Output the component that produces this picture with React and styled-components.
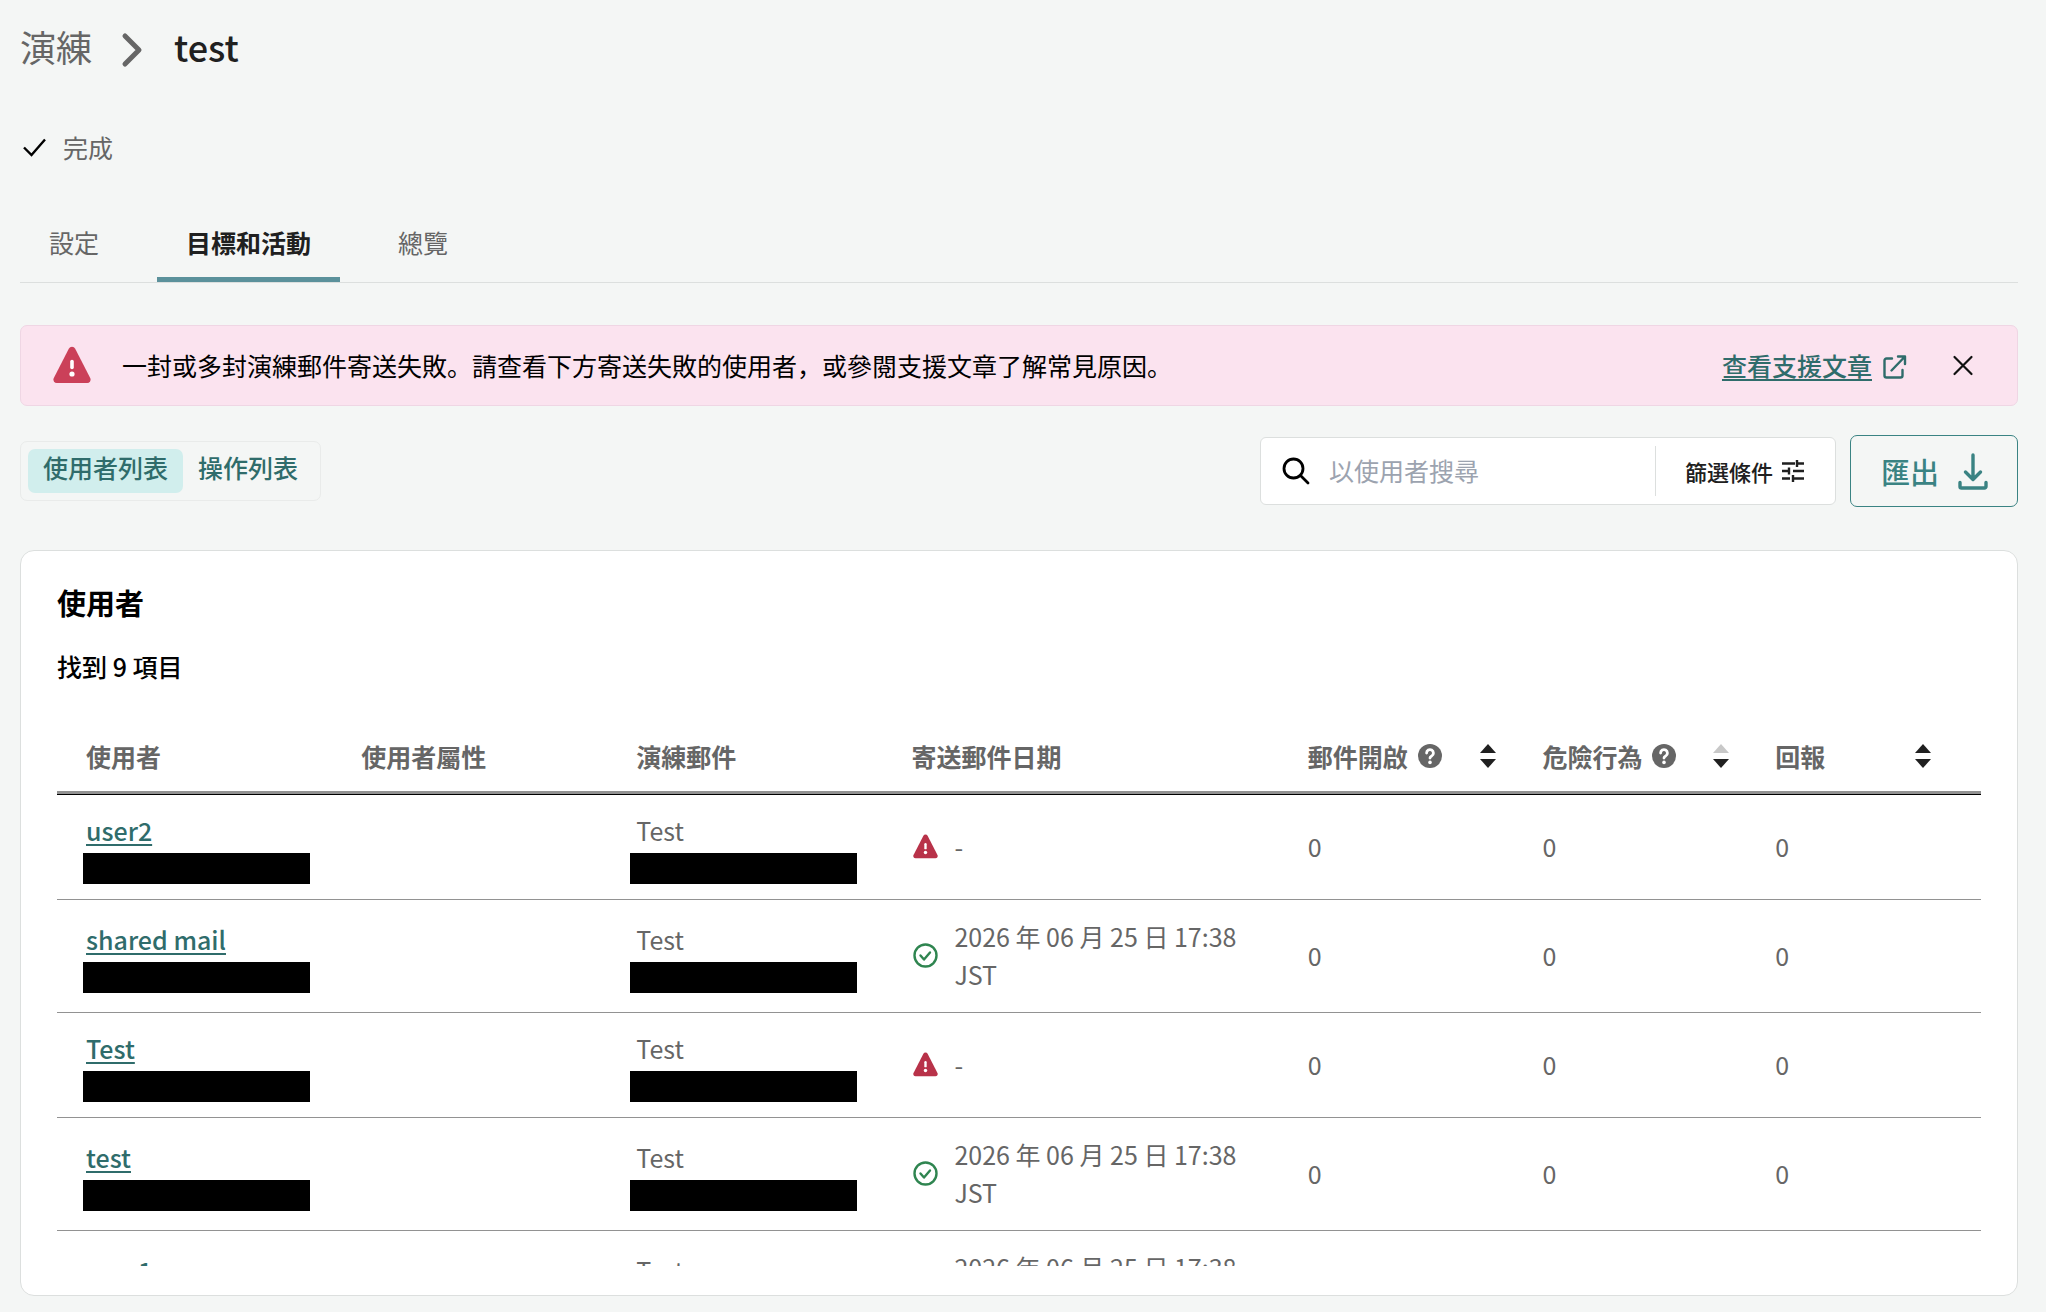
import React from "react"
import styled, { createGlobalStyle } from "styled-components"

const colors = {
  page: "#f4f6f5",
  text: "#202020",
  muted: "#666666",
  teal: "#2f6c6b",
  tealLight: "#3a8383",
  tabBar: "#5b919b",
  border: "#dcdfde",
  rule: "#929292",
  error: "#cb4059",
  errorDark: "#b83249",
  success: "#2f8550",
}

const users = [
  { id: 1, name: "user2", mail: "Test", sent: null },
  { id: 2, name: "shared mail", mail: "Test", sent: "2026 年 06 月 25 日 17:38 JST" },
  { id: 3, name: "Test", mail: "Test", sent: null },
  { id: 4, name: "test", mail: "Test", sent: "2026 年 06 月 25 日 17:38 JST" },
  { id: 5, name: "user1", mail: "Test", sent: "2026 年 06 月 25 日 17:38 JST" },
]

function ChevronIcon() {
  return (
    <svg width="24" height="44" viewBox="0 0 24 44" fill="none" stroke="#666" strokeWidth="5" strokeLinecap="round" strokeLinejoin="round" aria-hidden="true">
      <path d="M4 12l14 14L4 40" />
    </svg>
  )
}

function CheckIcon() {
  return (
    <svg width="26" height="26" viewBox="0 0 26 26" fill="none" stroke="#000" strokeWidth="2.4" aria-hidden="true">
      <path d="M3 13.5l7.5 7.5L24 5.5" />
    </svg>
  )
}

function WarningIcon({ size, color }) {
  return (
    <svg width={size} height={size} viewBox="0 0 38 38" aria-hidden="true">
      <path d="M15.8 2.8a3.6 3.6 0 0 1 6.4 0l15 29.3a3.4 3.4 0 0 1-3 4.900H3.800a3.400 3.400 0 0 1-3-4.900z" fill={color} />
      <path d="M19 15.500v6" stroke="#fff" strokeWidth="3.600" strokeLinecap="round" />
      <circle cx="19" cy="28" r="2.600" fill="#fff" />
    </svg>
  )
}

function ExternalIcon() {
  return (
    <svg width="24" height="28" viewBox="0 -4 24 28" fill="none" stroke="currentColor" strokeWidth="2.400" strokeLinecap="round" strokeLinejoin="round" aria-hidden="true">
      <path d="M9 3.500H3.500A2 2 0 0 0 1.500 5.500V20.500A2 2 0 0 0 3.500 22.500H17.500A2 2 0 0 0 19.500 20.500V15M15 1.500H22V9M21.500 2L8.500 15.500" />
    </svg>
  )
}

function CloseIcon() {
  return (
    <svg width="22" height="22" viewBox="0 0 22 22" stroke="#111" strokeWidth="2.200" strokeLinecap="round" aria-hidden="true">
      <path d="M2.500 3l17 17M19.500 3L2.500 20" />
    </svg>
  )
}

function SearchIcon() {
  return (
    <svg width="28" height="28" viewBox="0 0 28 28" fill="none" stroke="#000" strokeWidth="2.800" strokeLinecap="round" aria-hidden="true">
      <circle cx="11.500" cy="11.500" r="9.500" />
      <path d="M18.500 18.500L26 26" />
    </svg>
  )
}

function TuneIcon() {
  return (
    <svg width="24" height="24" viewBox="0 0 24 24" fill="none" stroke="#202020" strokeWidth="2.400" aria-hidden="true">
      <path d="M1 4.500h13M17 4.500h6M16 1v7M1 12h6M12 12h11M8 8.500v7M1 19.500h8M12 19.500h11M12 16v7" />
    </svg>
  )
}

function DownloadIcon() {
  return (
    <svg width="30" height="38" viewBox="0 0 30 38" fill="none" stroke="currentColor" strokeWidth="3.400" strokeLinecap="round" strokeLinejoin="round" aria-hidden="true">
      <path d="M15 3v24M7.500 20l7.500 7.500 7.500-7.500M2 30.500v4A1.500 1.500 0 0 0 3.500 36H26.500a1.500 1.500 0 0 0 1.500-1.500V30.500" />
    </svg>
  )
}

function SentIcon() {
  return (
    <svg width="25" height="25" viewBox="0 0 25 25" fill="none" stroke={colors.success} strokeWidth="2.400" strokeLinecap="round" strokeLinejoin="round" aria-hidden="true">
      <circle cx="12.500" cy="12.500" r="11" />
      <path d="M7.500 12.500l3.500 4 6-7" />
    </svg>
  )
}

function HelpIcon() {
  return (
    <svg width="24" height="24" viewBox="0 0 24 24" fill="none" aria-hidden="true">
      <circle cx="12" cy="12" r="12" fill="#666" />
      <path d="M8.600 9a3.400 3.400 0 1 1 5.200 2.900C12.600 12.700 12 13.100 12 14" stroke="#fff" strokeWidth="2.800" strokeLinecap="round" />
      <circle cx="12" cy="18.400" r="1.800" fill="#fff" />
    </svg>
  )
}

function SortIcon({ dimUp }) {
  return (
    <svg width="16" height="26" viewBox="0 0 16 26" aria-hidden="true">
      <path d="M8 1l8 9H0z" fill={dimUp ? "#c8c8c8" : "#202020"} />
      <path d="M8 25l8-9H0z" fill="#202020" />
    </svg>
  )
}

function SortHeader({ label, help, dimUp, last }) {
  return (
    <HeadCell $last={last}>
      <HeadContent>
        {label}
        {help && <HelpIcon />}
        <SortButton type="button" aria-label={label}>
          <SortIcon dimUp={dimUp} />
        </SortButton>
      </HeadContent>
    </HeadCell>
  )
}

function UserRow({ name, mail, sent }) {
  return (
    <tr>
      <Cell>
        <Stack>
          <NameLink href="#user">{name}</NameLink>
          <Redacted $outdent={3} />
        </Stack>
      </Cell>
      <Cell />
      <Cell>
        <Stack>
          <span>{mail}</span>
          <Redacted $outdent={6} />
        </Stack>
      </Cell>
      <Cell $tall>
        <SentDate>
          {sent ? <SentIcon /> : <WarningIcon size={25} color={colors.errorDark} />}
          <span>{sent || "-"}</span>
        </SentDate>
      </Cell>
      <Cell>0</Cell>
      <Cell>0</Cell>
      <Cell>0</Cell>
    </tr>
  )
}

export default function App() {
  return (
    <Page>
      <GlobalStyle />
      <Breadcrumb aria-label="breadcrumb">
        <a href="#list">演練</a>
        <ChevronIcon />
        <h1>test</h1>
      </Breadcrumb>
      <Status>
        <CheckIcon />
        完成
      </Status>
      <Tabs>
        <Tab type="button">設定</Tab>
        <Tab type="button" $active>目標和活動</Tab>
        <Tab type="button">總覽</Tab>
      </Tabs>
      <Alert role="alert">
        <WarningIcon size={38} color={colors.error} />
        <p>一封或多封演練郵件寄送失敗。請查看下方寄送失敗的使用者，或參閱支援文章了解常見原因。</p>
        <AlertLink href="#support">
          <span>查看支援文章</span>
          <ExternalIcon />
        </AlertLink>
        <CloseButton type="button" aria-label="關閉">
          <CloseIcon />
        </CloseButton>
      </Alert>
      <Toolbar>
        <Toggle>
          <ToggleButton type="button" $active>使用者列表</ToggleButton>
          <ToggleButton type="button">操作列表</ToggleButton>
        </Toggle>
        <SearchBox>
          <SearchLabel>
            <SearchIcon />
            <SearchInput type="text" placeholder="以使用者搜尋" aria-label="以使用者搜尋" />
          </SearchLabel>
          <FilterButton type="button">
            篩選條件
            <TuneIcon />
          </FilterButton>
        </SearchBox>
        <ExportButton type="button">
          匯出
          <DownloadIcon />
        </ExportButton>
      </Toolbar>
      <Card>
        <CardTitle>使用者</CardTitle>
        <CardCount>找到 9 項目</CardCount>
        <TableScroll>
          <Table>
            <colgroup>
              <Col $width="14.3%" />
              <Col $width="14.3%" />
              <Col $width="14.3%" />
              <Col $width="20.6%" />
              <Col $width="12.2%" />
              <Col $width="12.1%" />
              <Col $width="12.2%" />
            </colgroup>
            <thead>
              <tr>
                <HeadCell>使用者</HeadCell>
                <HeadCell>使用者屬性</HeadCell>
                <HeadCell>演練郵件</HeadCell>
                <HeadCell>寄送郵件日期</HeadCell>
                <SortHeader label="郵件開啟" help />
                <SortHeader label="危險行為" help dimUp />
                <SortHeader label="回報" last />
              </tr>
            </thead>
            <tbody>
              {users.map(user => (
                <UserRow key={user.id} {...user} />
              ))}
            </tbody>
          </Table>
        </TableScroll>
      </Card>
    </Page>
  )
}

const GlobalStyle = createGlobalStyle`
  * {
    box-sizing: border-box;
  }
  body {
    margin: 0;
    background: ${colors.page};
    color: ${colors.muted};
    font-family: "Noto Sans CJK JP", "Noto Sans CJK TC", sans-serif;
    font-size: 25px;
    line-height: 38px;
  }
  h1, h2, p {
    margin: 0;
  }
  button, input {
    font: inherit;
    color: inherit;
    background: none;
    border: 0;
    padding: 0;
  }
  button {
    cursor: pointer;
  }
  svg {
    flex: none;
    display: block;
  }
`

const Page = styled.main`
  display: flex;
  flex-direction: column;
  height: 100vh;
  padding: 18px 28px 16px 20px;
`

const Breadcrumb = styled.nav`
  display: flex;
  align-items: center;
  gap: 29px;
  font-size: 36px;
  line-height: 56px;

  a {
    color: inherit;
    text-decoration: none;
  }
  h1 {
    color: ${colors.text};
    font-size: 36px;
    font-weight: 500;
  }
`

const Status = styled.div`
  display: flex;
  align-items: center;
  gap: 16px;
  margin-top: 54px;
  padding-left: 1px;
`

const Tabs = styled.div`
  display: flex;
  gap: 29px;
  margin-top: 39px;
  border-bottom: 1px solid ${colors.border};
`

const Tab = styled.button`
  padding: 18px 29px 16px;
  border-bottom: 5px solid ${({ $active }) => ($active ? colors.tabBar : "transparent")};
  color: ${({ $active }) => ($active ? colors.text : colors.muted)};
  font-weight: ${({ $active }) => ($active ? 700 : 400)};
`

const Alert = styled.div`
  display: flex;
  align-items: center;
  margin-top: 42px;
  padding: 20px 43px 21px 32px;
  border: 1px solid #efd6e4;
  border-radius: 7px;
  background: #fbe3ef;
  color: #000;

  p {
    flex: 1;
    margin-left: 31px;
  }
`

const AlertLink = styled.a`
  display: flex;
  align-items: center;
  gap: 11px;
  color: ${colors.teal};
  font-weight: 500;
  text-decoration: none;

  span {
    text-decoration: underline;
    text-decoration-thickness: 2px;
    text-underline-offset: 3px;
  }
`

const CloseButton = styled.button`
  margin-left: 45px;
`

const Toolbar = styled.div`
  display: flex;
  align-items: center;
  gap: 14px;
  margin-top: 29px;
`

const Toggle = styled.div`
  display: flex;
  margin-right: auto;
  padding: 7px;
  border: 1px solid #e9ebea;
  border-radius: 7px;
`

const ToggleButton = styled.button`
  padding: 0 15px 8px;
  border-radius: 7px;
  background: ${({ $active }) => ($active ? "#d1eeed" : "transparent")};
  color: ${colors.teal};
  font-weight: 500;
  line-height: 36px;
`

const SearchBox = styled.div`
  display: flex;
  padding: 8px 0;
  border: 1px solid ${colors.border};
  border-radius: 6px;
  background: #fff;
`

const SearchLabel = styled.label`
  display: flex;
  align-items: center;
  gap: 19px;
  width: 394px;
  height: 50px;
  padding-left: 21px;
`

const SearchInput = styled.input`
  flex: 1;
  min-width: 0;
  padding-bottom: 2px;
  outline: none;
  color: ${colors.text};

  &::placeholder {
    color: #9ca3af;
    opacity: 1;
  }
`

const FilterButton = styled.button`
  display: flex;
  align-items: center;
  gap: 8px;
  padding: 0 30px 0 29px;
  border-left: 1px solid ${colors.border};
  color: ${colors.text};
  font-size: 22px;
  font-weight: 500;
`

const ExportButton = styled.button`
  display: flex;
  align-items: center;
  gap: 19px;
  height: 72px;
  padding: 0 29px 0 30px;
  border: 1px solid ${colors.tealLight};
  border-radius: 7px;
  color: ${colors.tealLight};
  font-size: 29px;
  font-weight: 500;
`

const Card = styled.section`
  display: flex;
  flex: 1;
  flex-direction: column;
  min-height: 0;
  margin-top: 43px;
  padding: 27px 36px 29px;
  border: 1px solid ${colors.border};
  border-radius: 14px;
  background: #fff;
`

const CardTitle = styled.h2`
  color: #000;
  font-size: 29px;
  line-height: 48px;
`

const CardCount = styled.p`
  margin: 21px 0 38px;
  color: #000;
  font-weight: 500;
`

const TableScroll = styled.div`
  flex: 1;
  min-height: 0;
  overflow-y: auto;
  scrollbar-width: none;
`

const Table = styled.table`
  width: 100%;
  table-layout: fixed;
  border-spacing: 0;

  tbody tr:first-child td {
    border-top: 1px solid #000;
  }
`

const Col = styled.col`
  width: ${({ $width }) => $width};
`

const HeadCell = styled.th`
  padding: 14px ${({ $last }) => ($last ? "50px" : "17px")} 16px 29px;
  border-bottom: 3px solid ${colors.rule};
  font-weight: 700;
  text-align: left;
  white-space: nowrap;
`

const HeadContent = styled.div`
  display: flex;
  align-items: center;
  gap: 10px;
`

const SortButton = styled.button`
  margin-left: auto;
`

const Cell = styled.td`
  padding: ${({ $tall }) => ($tall ? "17px 29px 19px" : "13px 29px 15px")};
  border-bottom: 1px solid ${colors.rule};
`

const Stack = styled.div`
  display: flex;
  flex-direction: column;
  align-items: flex-start;
  gap: 4px;
  padding-top: 3px;
`

const NameLink = styled.a`
  color: ${colors.teal};
  font-weight: 500;
  text-decoration: underline;
  text-decoration-thickness: 2px;
  text-underline-offset: 3px;
`

const Redacted = styled.div`
  width: 227px;
  height: 31px;
  margin-left: -${({ $outdent }) => $outdent}px;
  background: #000;
`

const SentDate = styled.div`
  display: flex;
  align-items: center;
  gap: 16px;
  padding-left: 2px;
  margin-right: -29px;
`
